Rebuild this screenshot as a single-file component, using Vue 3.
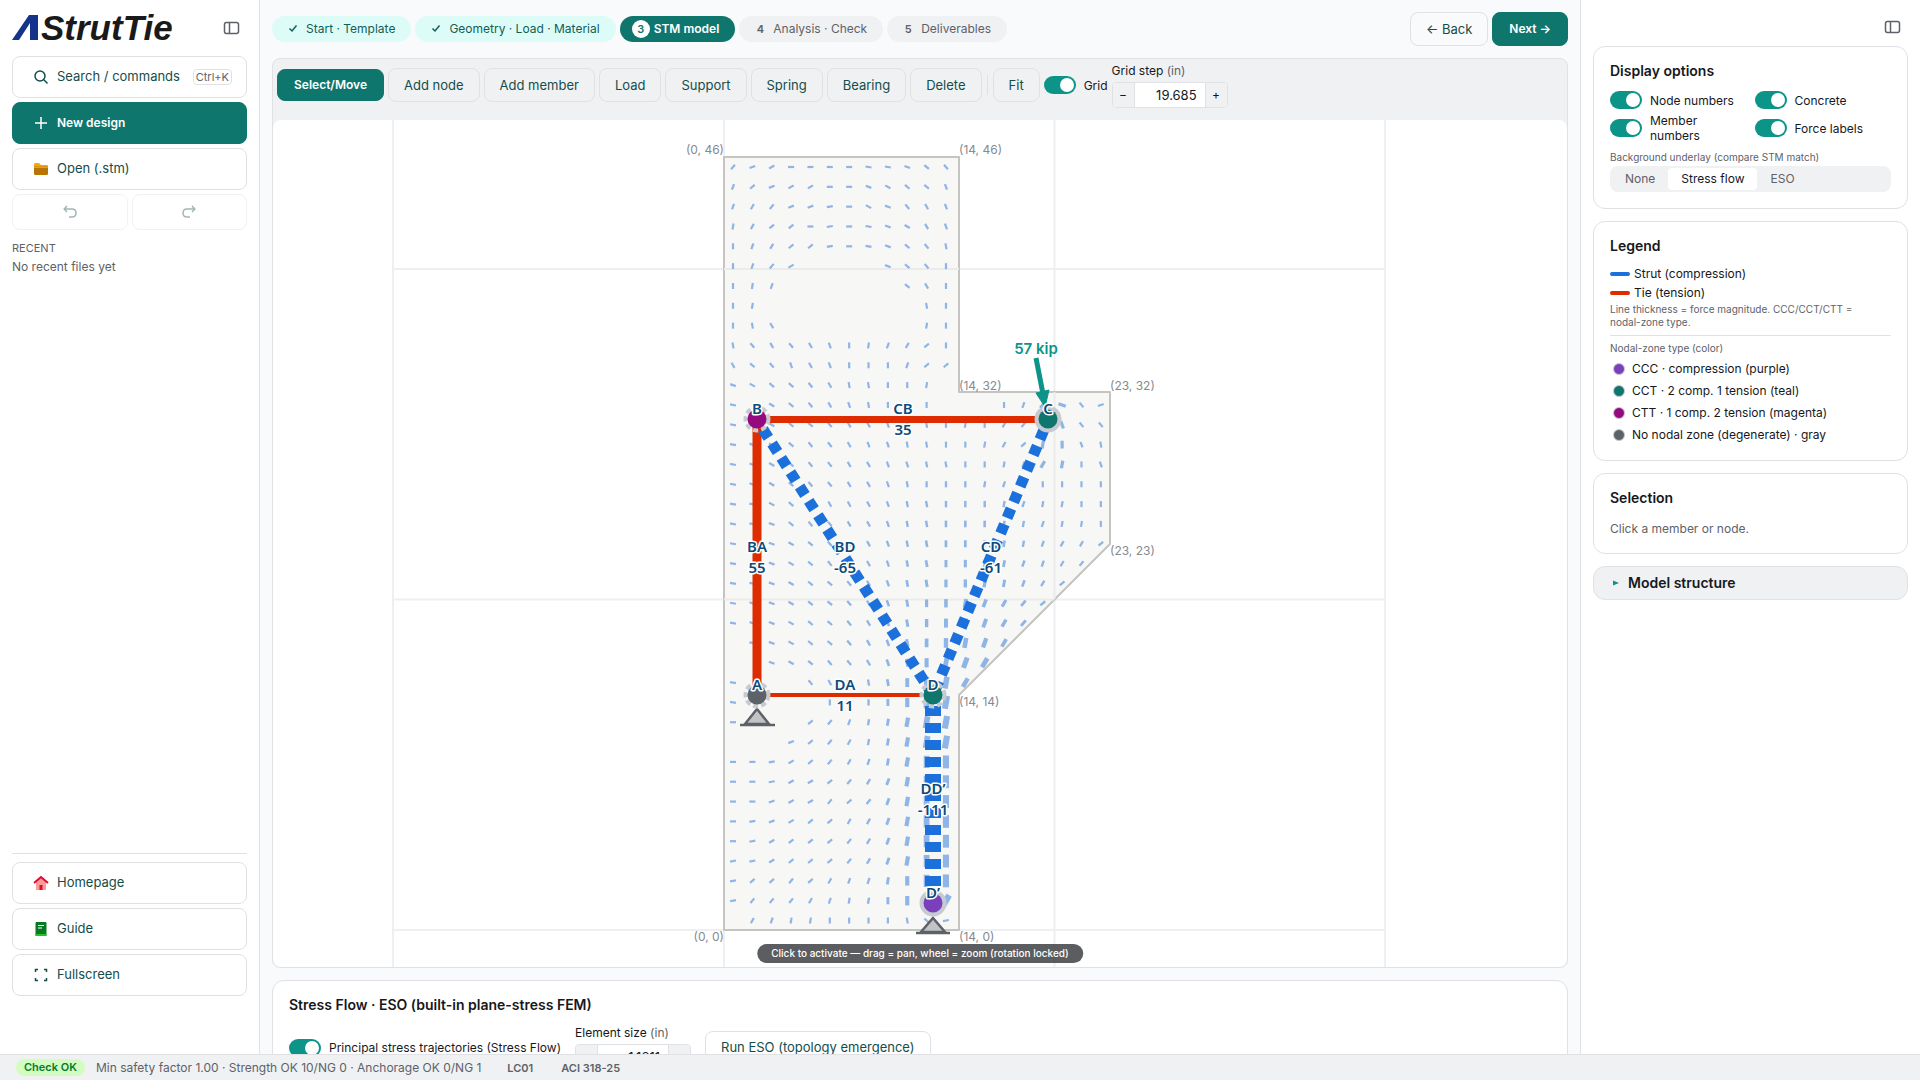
<script setup>
import { ref } from 'vue'

const steps = [
  { mark: '✓', label: 'Start · Template', state: 'done' },
  { mark: '✓', label: 'Geometry · Load · Material', state: 'done' },
  { mark: '3', label: 'STM model', state: 'current' },
  { mark: '4', label: 'Analysis · Check', state: 'todo' },
  { mark: '5', label: 'Deliverables', state: 'todo' },
]
const tools = ['Add node', 'Add member', 'Load', 'Support', 'Spring', 'Bearing', 'Delete']
const showGrid = ref(true)
const gridStep = ref('19.685')
const elementSize = ref('1.1811')
const showFlow = ref(true)
const options = ref([
  { id: 'nodes', label: 'Node numbers', on: true },
  { id: 'concrete', label: 'Concrete', on: true },
  { id: 'members', label: 'Member numbers', on: true },
  { id: 'forces', label: 'Force labels', on: true },
])
const underlays = ['None', 'Stress flow', 'ESO']
const underlay = ref('Stress flow')
const zones = [
  { color: '#7a3fbb', label: 'CCC · compression (purple)' },
  { color: '#0f766e', label: 'CCT · 2 comp. 1 tension (teal)' },
  { color: '#960a80', label: 'CTT · 1 comp. 2 tension (magenta)' },
  { color: '#5d6269', label: 'No nodal zone (degenerate) · gray' },
]

// Principal stress direction per element: a = 0°, each next letter adds 10°, dot = negligible.
const field = [
  'fcdaaaarrqon', 'hecddaaqpool', 'hgfccbapqnml', 'igeeabarqpml', 'jhgeebarqonk',
  'jhfd....qonj', 'jih......omj', 'ji........kj', 'jkm.......ij', 'knmnmljihgej',
  'monlmljjjhee', 'qpoonmkkjji.', 'r.ponmlkjjj...jhfqnc', 'rrpoonmmlkkjijgf.lnn',
  'rqqonnmllkkjjigeijlk', 'rqponnmmllkkjjihgijlk', 'rqponnmmlkjjjihijjjj', 'rrponmmmlkkjjjihiijj',
  'rrqonnmmlkkjjjiihiij', 'rrqponnmlkkjjjiihgge', 'rrqponmmlkkjjjihhgf.', 'rrqpoonmlkkjjiihge',
  'rqqpoonmlkjjihgfe', 'rqqpoonmlkjjihgf', '.rqpoonmlkjjihg', '..qponnmlkjihg',
  'r...nmlkkjjig', 'r....j.jjjji', 'a...efhiiiii', '...cefgiiiii', 'aabdefghiijj',
  'aabddefghijj', 'aacddfefhijj', 'abcdeegghijj', 'abdeeefghijj', 'bbdeeefghijj',
  'beefeghhijjj', 'bfffghiijjjg', '.ghiijjjjkob',
]
const dashes = field.flatMap((row, r) =>
  [...row].slice(0, 20).flatMap((ch, c) => {
    if (ch === '.') return []
    const angle = (ch.charCodeAt(0) - 97) * 10
    const spread = r > 25 ? (c - 10.7) / 2 : (c - 12) / 3
    const ramp = Math.max(0, Math.min(1, (r - 14) / 13))
    let k = ramp * ramp * Math.exp(-spread * spread)
    if (r > 37) k = 0
    if (r > 11 && r < 16 && (c === 16 || c === 17)) k = 0.25
    const len = 6 + 7 * k
    return [{
      key: r + '-' + c,
      x: 733 + 19.36 * c,
      y: 167 + 19.83 * r,
      len,
      w: 2.2 + 4 * k,
      angle,
    }]
  })
)

const corners = [
  { x: 724, y: 154, t: '(0, 46)', a: 'end' },
  { x: 959, y: 154, t: '(14, 46)', a: 'start' },
  { x: 959, y: 390, t: '(14, 32)', a: 'start' },
  { x: 1110, y: 390, t: '(23, 32)', a: 'start' },
  { x: 1110, y: 555, t: '(23, 23)', a: 'start' },
  { x: 959, y: 706, t: '(14, 14)', a: 'start' },
  { x: 724, y: 941, t: '(0, 0)', a: 'end' },
  { x: 959, y: 941, t: '(14, 0)', a: 'start' },
]
const members = [
  { d: 'M757 420V695', kind: 'tie', w: 9 },
  { d: 'M757 419.500H1048', kind: 'tie', w: 7 },
  { d: 'M757 695H933', kind: 'tie', w: 4 },
  { d: 'M757 420L933 695', kind: 'strut', w: 11 },
  { d: 'M1048 420L933 695', kind: 'strut', w: 11 },
  { d: 'M933 695V903', kind: 'strut', w: 16 },
]
const nodes = [
  { x: 757, y: 419, c: '#960a80', t: 'B', rough: true },
  { x: 1048, y: 419, c: '#0f766e', t: 'C' },
  { x: 933, y: 695, c: '#0f766e', t: 'D', rough: true },
  { x: 757, y: 695, c: '#5d6269', t: 'A', rough: true },
  { x: 933, y: 903, c: '#7a3fbb', t: 'D’' },
]
const forces = [
  { x: 903, y: 414, t: 'CB', v: '35' },
  { x: 757, y: 552, t: 'BA', v: '55' },
  { x: 845, y: 552, t: 'BD', v: '-65' },
  { x: 991, y: 552, t: 'CD', v: '-61' },
  { x: 845, y: 690, t: 'DA', v: '11' },
  { x: 933, y: 794, t: 'DD’', v: '-111' },
]
</script>

<template>
  <div class="app">
    <div class="body">
      <aside class="left">
        <div class="brand">
          <svg class="logo" width="164" height="34" viewBox="0 0 164 34" role="img" aria-label="AStrutTie">
            <path d="M0 29L17 4H26V29H18V12L7 29Z" fill="#14338a" />
            <text x="29" y="29" class="logo-text">StrutTie</text>
          </svg>
          <button class="icon-btn" aria-label="Toggle sidebar">
            <svg width="18" height="16" viewBox="0 0 18 16"><rect x="1.500" y="2.500" width="14" height="11" rx="2" /><path d="M6.500 2.500v11" /></svg>
          </button>
        </div>
        <button class="side-btn">
          <svg class="ico line" width="16" height="16" viewBox="0 0 16 16"><circle cx="7" cy="7" r="5" /><path d="M10.800 10.800L14.500 14.500" /></svg>
          <span>Search / commands</span><kbd>Ctrl+K</kbd>
        </button>
        <button class="side-btn primary">
          <svg class="ico line" width="16" height="16" viewBox="0 0 16 16"><path d="M8 2v12M2 8h12" /></svg>
          <span>New design</span>
        </button>
        <button class="side-btn">
          <svg class="ico" width="16" height="16" viewBox="0 0 16 16"><path d="M1 3.500Q1 2 2.500 2H6L8 4H14Q15 4 15 5V8H1Z" fill="#f5a800" /><path d="M1 5.500H15V12.500Q15 14 13.500 14H2.500Q1 14 1 12.500Z" fill="#b87503" /><path d="M1 5.500H15V7H1Z" fill="#e0a030" /></svg>
          <span>Open (.stm)</span>
        </button>
        <div class="history">
          <button class="side-btn" disabled aria-label="Undo"><svg class="line" width="16" height="16" viewBox="0 0 16 16"><path d="M5 2L2.200 5L5 8M2.500 5H10Q14 5 14 9Q14 13 10 13H7" /></svg></button>
          <button class="side-btn" disabled aria-label="Redo"><svg class="line" width="16" height="16" viewBox="0 0 16 16"><path d="M11 2L13.800 5L11 8M13.500 5H6Q2 5 2 9Q2 13 6 13H9" /></svg></button>
        </div>
        <div class="recent-title">RECENT</div>
        <div class="recent-empty">No recent files yet</div>
        <nav class="links">
          <a href="#home" class="side-btn">
            <svg class="ico" width="16" height="16" viewBox="0 0 16 16"><path d="M3 7L8 2.500L13 7V15H3Z" fill="#ff9a94" /><path d="M1 8L8 2L15 8" fill="none" stroke="#dc0a35" stroke-width="2" /><rect x="6.500" y="10" width="3" height="5" fill="#dc0a35" /></svg>
            <span>Homepage</span>
          </a>
          <a href="#guide" class="side-btn">
            <svg class="ico" width="16" height="16" viewBox="0 0 16 16"><rect x="2.500" y="1" width="11" height="14" rx="1" fill="#067a22" /><path d="M2.500 13H13.500V15H2.500Z" fill="#1fc41f" /><path d="M5 4.500h6M5 7h4" stroke="#fff" stroke-width="1.200" /></svg>
            <span>Guide</span>
          </a>
          <button class="side-btn">
            <svg class="ico line" width="16" height="16" viewBox="0 0 16 16"><path d="M2.500 5V2.500H5M11 2.500H13.500V5M13.500 11V13.500H11M5 13.500H2.500V11" /></svg>
            <span>Fullscreen</span>
          </button>
        </nav>
      </aside>

      <main>
        <header class="top">
          <ol class="steps">
            <li v-for="s in steps" :key="s.label" :class="['step', s.state]">
              <span class="mark">
                <svg v-if="s.state === 'done'" width="10" height="10" viewBox="0 0 10 10"><path d="M1.500 5.500L4 8L8.500 2.500" /></svg>
                <template v-else>{{ s.mark }}</template>
              </span>{{ s.label }}
            </li>
          </ol>
          <div class="wizard">
            <button class="btn">← Back</button>
            <button class="btn solid">Next →</button>
          </div>
        </header>

        <section class="editor">
          <div class="toolbar">
            <button class="btn solid small">Select/Move</button>
            <button v-for="t in tools" :key="t" class="btn">{{ t }}</button>
            <span class="sep"></span>
            <button class="btn">Fit</button>
            <label class="check"><input v-model="showGrid" type="checkbox" class="switch" />Grid</label>
            <div class="field">
              <label for="grid-step">Grid step <span class="unit">(in)</span></label>
              <div class="number">
                <button aria-label="Decrease grid step">−</button>
                <input id="grid-step" v-model="gridStep" type="text" />
                <button aria-label="Increase grid step">+</button>
              </div>
            </div>
          </div>
          <div class="canvas">
            <svg viewBox="273 120 1294 847">
              <g class="grid">
                <path d="M393 120V967M724 120V967M1054.500 120V967M1385 120V967" />
                <path d="M393 269H1385M393 599.500H1385M393 930H1385" />
              </g>
              <path class="concrete" d="M724 157H959V392H1110V544L959 695V930H724Z" />
              <path d="M724 269H959M724 599.500H1054M1054.500 392V599" class="grid inner" />
              <g class="flow">
                <rect
                  v-for="d in dashes" :key="d.key"
                  :x="d.x - d.len / 2" :y="d.y - d.w / 2" :width="d.len" :height="d.w"
                  :transform="`rotate(${-d.angle} ${d.x} ${d.y})`"
                />
              </g>
              <text v-for="c in corners" :key="c.t" :x="c.x" :y="c.y" :text-anchor="c.a" class="corner">{{ c.t }}</text>
              <path v-for="m in members" :key="m.d" :d="m.d" :class="m.kind" :stroke-width="m.w" />
              <g class="support">
                <path d="M757 709L769 724H745Z" /><path d="M740 725H775" />
                <path d="M933 918L945 932H921Z" /><path d="M916 933H950" />
              </g>
              <g class="load">
                <path d="M1036 358L1043 394" />
                <path class="head" d="M1036 393L1049 390L1045 407Z" />
              </g>
              <text x="1036" y="354" class="load-text">57 kip</text>
              <g v-for="n in nodes" :key="n.t">
                <circle :cx="n.x" :cy="n.y" r="11" :class="['ring', { rough: n.rough }]" />
                <circle :cx="n.x" :cy="n.y" r="9.500" :fill="n.c" />
                <text :x="n.x" :y="n.y - 5" class="tag">{{ n.t }}</text>
              </g>
              <g v-for="f in forces" :key="f.t">
                <text :x="f.x" :y="f.y" class="tag">{{ f.t }}</text>
                <text :x="f.x" :y="f.y + 21" class="tag">{{ f.v }}</text>
              </g>
            </svg>
            <div class="hint">Click to activate — drag = pan, wheel = zoom (rotation locked)</div>
          </div>
        </section>

        <section class="card stress">
          <h2>Stress Flow · ESO (built-in plane-stress FEM)</h2>
          <div class="stress-row">
            <label class="check"><input v-model="showFlow" type="checkbox" class="switch" />Principal stress trajectories (Stress Flow)</label>
            <div class="field">
              <label for="el-size">Element size <span class="unit">(in)</span></label>
              <div class="number">
                <button aria-label="Decrease element size">−</button>
                <input id="el-size" v-model="elementSize" type="text" />
                <button aria-label="Increase element size">+</button>
              </div>
            </div>
            <button class="btn">Run ESO (topology emergence)</button>
          </div>
        </section>
      </main>

      <aside class="right">
        <div class="right-top">
          <button class="icon-btn" aria-label="Toggle panel">
            <svg width="18" height="16" viewBox="0 0 18 16"><rect x="1.500" y="2.500" width="14" height="11" rx="2" /><path d="M6.500 2.500v11" /></svg>
          </button>
        </div>
        <section class="card">
          <h2>Display options</h2>
          <div class="options">
            <label v-for="o in options" :key="o.id" class="check"><input v-model="o.on" type="checkbox" class="switch" /><span>{{ o.label }}</span></label>
          </div>
          <div class="note underlay-label">Background underlay (compare STM match)</div>
          <div class="segments">
            <button v-for="u in underlays" :key="u" :class="{ on: u === underlay }" @click="underlay = u">{{ u }}</button>
          </div>
        </section>
        <section class="card legend">
          <h2>Legend</h2>
          <div class="key"><i class="bar strut-bar"></i>Strut (compression)</div>
          <div class="key"><i class="bar tie-bar"></i>Tie (tension)</div>
          <p class="note">Line thickness = force magnitude. CCC/CCT/CTT = <span class="keep">nodal-zone</span> type.</p>
          <hr />
          <div class="note">Nodal-zone type (color)</div>
          <ul class="zones">
            <li v-for="z in zones" :key="z.color"><i class="dot" :style="{ background: z.color }"></i>{{ z.label }}</li>
          </ul>
        </section>
        <section class="card">
          <h2>Selection</h2>
          <p class="empty">Click a member or node.</p>
        </section>
        <button class="model"><svg width="6" height="6" viewBox="0 0 6 6"><path d="M0 0.500L6 3L0 5.500Z" fill="#0d9488" /></svg>Model structure</button>
      </aside>
    </div>

    <footer class="status">
      <span class="ok">Check OK</span>
      <span class="summary">Min safety factor 1.00 · Strength OK 10/NG 0 · Anchorage OK 0/NG 1</span>
      <span class="meta">LC01</span>
      <span class="meta">ACI 318-25</span>
    </footer>
  </div>
</template>

<style>
body { margin: 0; background: #f9fafc; }
</style>

<style scoped>
.app {
  display: flex;
  flex-direction: column;
  height: 100vh;
  overflow: hidden;
  font: 12px/16px Inter, sans-serif;
  color: #16181c;
}
.app *, .app { box-sizing: border-box; }
button, input { font: inherit; color: inherit; margin: 0; }
button { cursor: pointer; }
.body { flex: 1; min-height: 0; display: flex; }

/* left sidebar */
.left {
  width: 260px;
  flex: none;
  display: flex;
  flex-direction: column;
  gap: 4px;
  padding: 10px 12px 58px;
  background: #fff;
  border-right: 1px solid #dfe1e5;
}
.brand { display: flex; align-items: center; justify-content: space-between; height: 42px; padding-bottom: 6px; }
.logo { overflow: visible; }
.logo-text { font: italic bold 35px "Liberation Sans", sans-serif; fill: #1a1a1a; }
.icon-btn { display: flex; border: 0; padding: 0; background: none; margin-right: 6px; }
.icon-btn svg { fill: none; stroke: #5d6269; stroke-width: 1.500; }
.side-btn {
  display: flex;
  align-items: center;
  gap: 8px;
  height: 42px;
  padding: 0 14px 0 20px;
  border: 1px solid #dfe1e5;
  border-radius: 8px;
  background: #fff;
  color: #134e4a;
  font-size: 13px;
  text-decoration: none;
}
.side-btn span { line-height: 17px; padding-bottom: 1px; }
.primary { background: #0f766e; border-color: #0f766e; color: #fff; font-size: 12px; font-weight: 600; }
.line { fill: none; stroke: currentColor; stroke-width: 1.500; }
kbd {
  margin-left: auto;
  padding: 0 2px;
  border: 1px solid #dfe1e5;
  border-radius: 4px;
  font: 11px/14px Inter, sans-serif;
  color: #5d6269;
}
.history { display: grid; grid-template-columns: 1fr 1fr; gap: 4px; }
.history .side-btn { height: 36px; padding: 0; justify-content: center; opacity: 0.4; }
.recent-title { margin-top: 6px; font-size: 11px; color: #5d6269; }
.recent-empty { color: #5d6269; margin-top: -1px; }
.links {
  display: flex;
  flex-direction: column;
  gap: 4px;
  margin-top: auto;
  padding-top: 8px;
  border-top: 1px solid #dfe1e5;
}

/* main column */
main { flex: 1; min-width: 0; padding: 12px; overflow: hidden; }
.top { display: flex; justify-content: space-between; align-items: center; margin-bottom: 12px; }
.steps { display: flex; gap: 4px; margin: 0; padding: 0 0 1px; list-style: none; }
.step {
  display: flex;
  align-items: center;
  gap: 4px;
  height: 26px;
  padding: 0 16px 0 12px;
  border-radius: 13px;
  background: #f0f1f3;
  color: #5d6269;
}
.mark { width: 18px; text-align: center; font-size: 11px; font-weight: 600; line-height: 18px; border-radius: 9px; }
.done { background: #ddfcf7; color: #115e59; }
.mark svg { fill: none; stroke: currentColor; stroke-width: 1.500; }
.current { background: #0f766e; color: #fff; font-weight: 600; }
.current .mark { background: #fff; color: #0f766e; }
.wizard { display: flex; gap: 4px; }
.btn {
  height: 34px;
  padding: 0 15px 1px;
  border: 1px solid #dfe1e5;
  border-radius: 8px;
  background: transparent;
  color: #134e4a;
  font-size: 13px;
  white-space: nowrap;
}
.solid { background: #0f766e; border-color: #0f766e; color: #fff; font-size: 12px; font-weight: 600; padding: 0 16px 1px; }
.small { height: 32px; }
.editor { border: 1px solid #dfe1e5; border-radius: 8px; background: #f0f1f3; overflow: hidden; }
.toolbar { display: flex; align-items: center; gap: 4px; padding: 4px 4px 13px; height: 61px; }
.sep { width: 1px; height: 20px; margin: 0 1px; background: #dfe1e5; }
.check { display: flex; align-items: center; gap: 8px; line-height: 15px; }
.switch {
  appearance: none;
  flex: none;
  display: flex;
  justify-content: flex-end;
  width: 32px;
  height: 18px;
  padding: 2px;
  border-radius: 9px;
  background: #0d9488;
}
.switch::before { content: ""; width: 14px; height: 14px; border-radius: 7px; background: #fff; }
.switch:not(:checked) { background: #c3c7cc; justify-content: flex-start; }
.field > label { display: block; line-height: 16px; margin-bottom: 3px; }
.unit { color: #5d6269; }
.number { display: flex; width: 116px; height: 26px; border: 1px solid #dfe1e5; border-radius: 4px; overflow: hidden; background: #fff; }
.number button { width: 21px; padding: 0; border: 0; background: #f0f1f3; }
.number input { flex: 1; min-width: 0; border: solid #dfe1e5; border-width: 0 1px; padding: 0 8px; text-align: right; background: #fff; font-size: 13px; }
.canvas { position: relative; background: #fff; border-radius: 8px; overflow: hidden; }
.canvas svg { display: block; width: 100%; height: auto; }
.grid { stroke: #eeeff1; stroke-width: 2; fill: none; }
.inner { stroke: #ebebec; }
.concrete { fill: #f7f7f5; stroke: #c5c4c0; stroke-width: 2; stroke-linejoin: round; }
.flow { fill: #8fb5e6; }
.tie { stroke: #dd2c00; fill: none; }
.strut { stroke: #1c70dc; fill: none; stroke-dasharray: 10 7; stroke-dashoffset: 6; }
.support path { fill: #c2c3c5; stroke: #5d6269; stroke-width: 2.500; }
.load path { stroke: #0d9488; stroke-width: 5; }
.load .head { fill: #0d9488; stroke-width: 1; }
.load-text { font: 600 15px Inter, sans-serif; fill: #0d9488; text-anchor: middle; }
.corner { font: 12px Inter, sans-serif; fill: #868a90; }
.ring { fill: none; stroke: #c7cad0; stroke-width: 5; }
.rough { stroke-dasharray: 5 3; }
.tag {
  font: 600 15px "Noto Sans", sans-serif;
  fill: #0c4a7a;
  stroke: #fff;
  stroke-width: 3;
  stroke-linejoin: round;
  paint-order: stroke;
  text-anchor: middle;
}
.hint {
  position: absolute;
  left: 50%;
  bottom: 4px;
  transform: translateX(-50%);
  padding: 0 14px;
  border-radius: 10px;
  background: rgba(60, 62, 65, 0.84);
  color: #fff;
  font-size: 10px;
  font-weight: 500;
  line-height: 19px;
  white-space: nowrap;
}
.card { background: #fff; border: 1px solid #dfe1e5; border-radius: 12px; padding: 16px; }
h2 { margin: 0 0 12px; font-size: 14px; line-height: 16px; font-weight: 600; }
.stress { margin-top: 12px; }
.stress-row { display: flex; align-items: center; gap: 14px; }

/* right sidebar */
.right {
  width: 340px;
  flex: none;
  display: flex;
  flex-direction: column;
  gap: 12px;
  padding: 12px;
  background: #fff;
  border-left: 1px solid #dfe1e5;
}
.right-top { display: flex; justify-content: flex-end; height: 22px; padding-top: 7px; }
.options { display: grid; grid-template-columns: 1fr 1fr; gap: 4px 8px; }
.options span { max-width: 88px; }
.note { margin: 0; font-size: 10px; line-height: 13px; color: #5d6269; }
.keep { white-space: nowrap; }
.underlay-label { margin: 8px 0 2px; }
.segments { display: flex; padding: 2px; border-radius: 8px; background: #f0f1f3; }
.segments button { height: 22px; padding: 0 13px; border: 0; border-radius: 4px; background: none; color: #5d6269; }
.segments .on { background: #fff; color: #16181c; }
.legend h2 { margin-bottom: 10px; }
.key { display: flex; align-items: center; gap: 4px; line-height: 19px; }
.bar { width: 20px; height: 4px; border-radius: 2px; }
.strut-bar { background: #1c70dc; }
.tie-bar { background: #dd2c00; }
.legend p { margin-top: 1px; }
hr { margin: 6px 0; border: 0; border-top: 1px solid #dfe1e5; }
.zones { margin: 3px 0 -2px; padding: 0; list-style: none; }
.zones li { display: flex; align-items: center; gap: 7px; padding-left: 3px; line-height: 22px; }
.dot { width: 12px; height: 12px; border-radius: 6px; border: 1px solid #c7cad0; }
.empty { margin: 15px 0 0; line-height: 16px; color: #5d6269; }
.model {
  display: flex;
  align-items: center;
  gap: 9px;
  height: 34px;
  padding: 0 19px 1px;
  border: 1px solid #dfe1e5;
  border-radius: 12px;
  background: #f0f1f3;
  font-size: 14px;
  font-weight: 600;
}

.status {
  display: flex;
  align-items: center;
  height: 26px;
  padding: 0 16px;
  border-top: 1px solid #dfe1e5;
  background: #f0f1f3;
  color: #5d6269;
}
.ok { padding: 0 8px; border-radius: 9px; background: #d3fcc0; color: #077a2c; font-size: 11px; font-weight: 600; line-height: 17px; }
.summary { margin: 0 26px 0 11px; }
.meta { margin-right: 28px; font-size: 11px; font-weight: 600; }
</style>
